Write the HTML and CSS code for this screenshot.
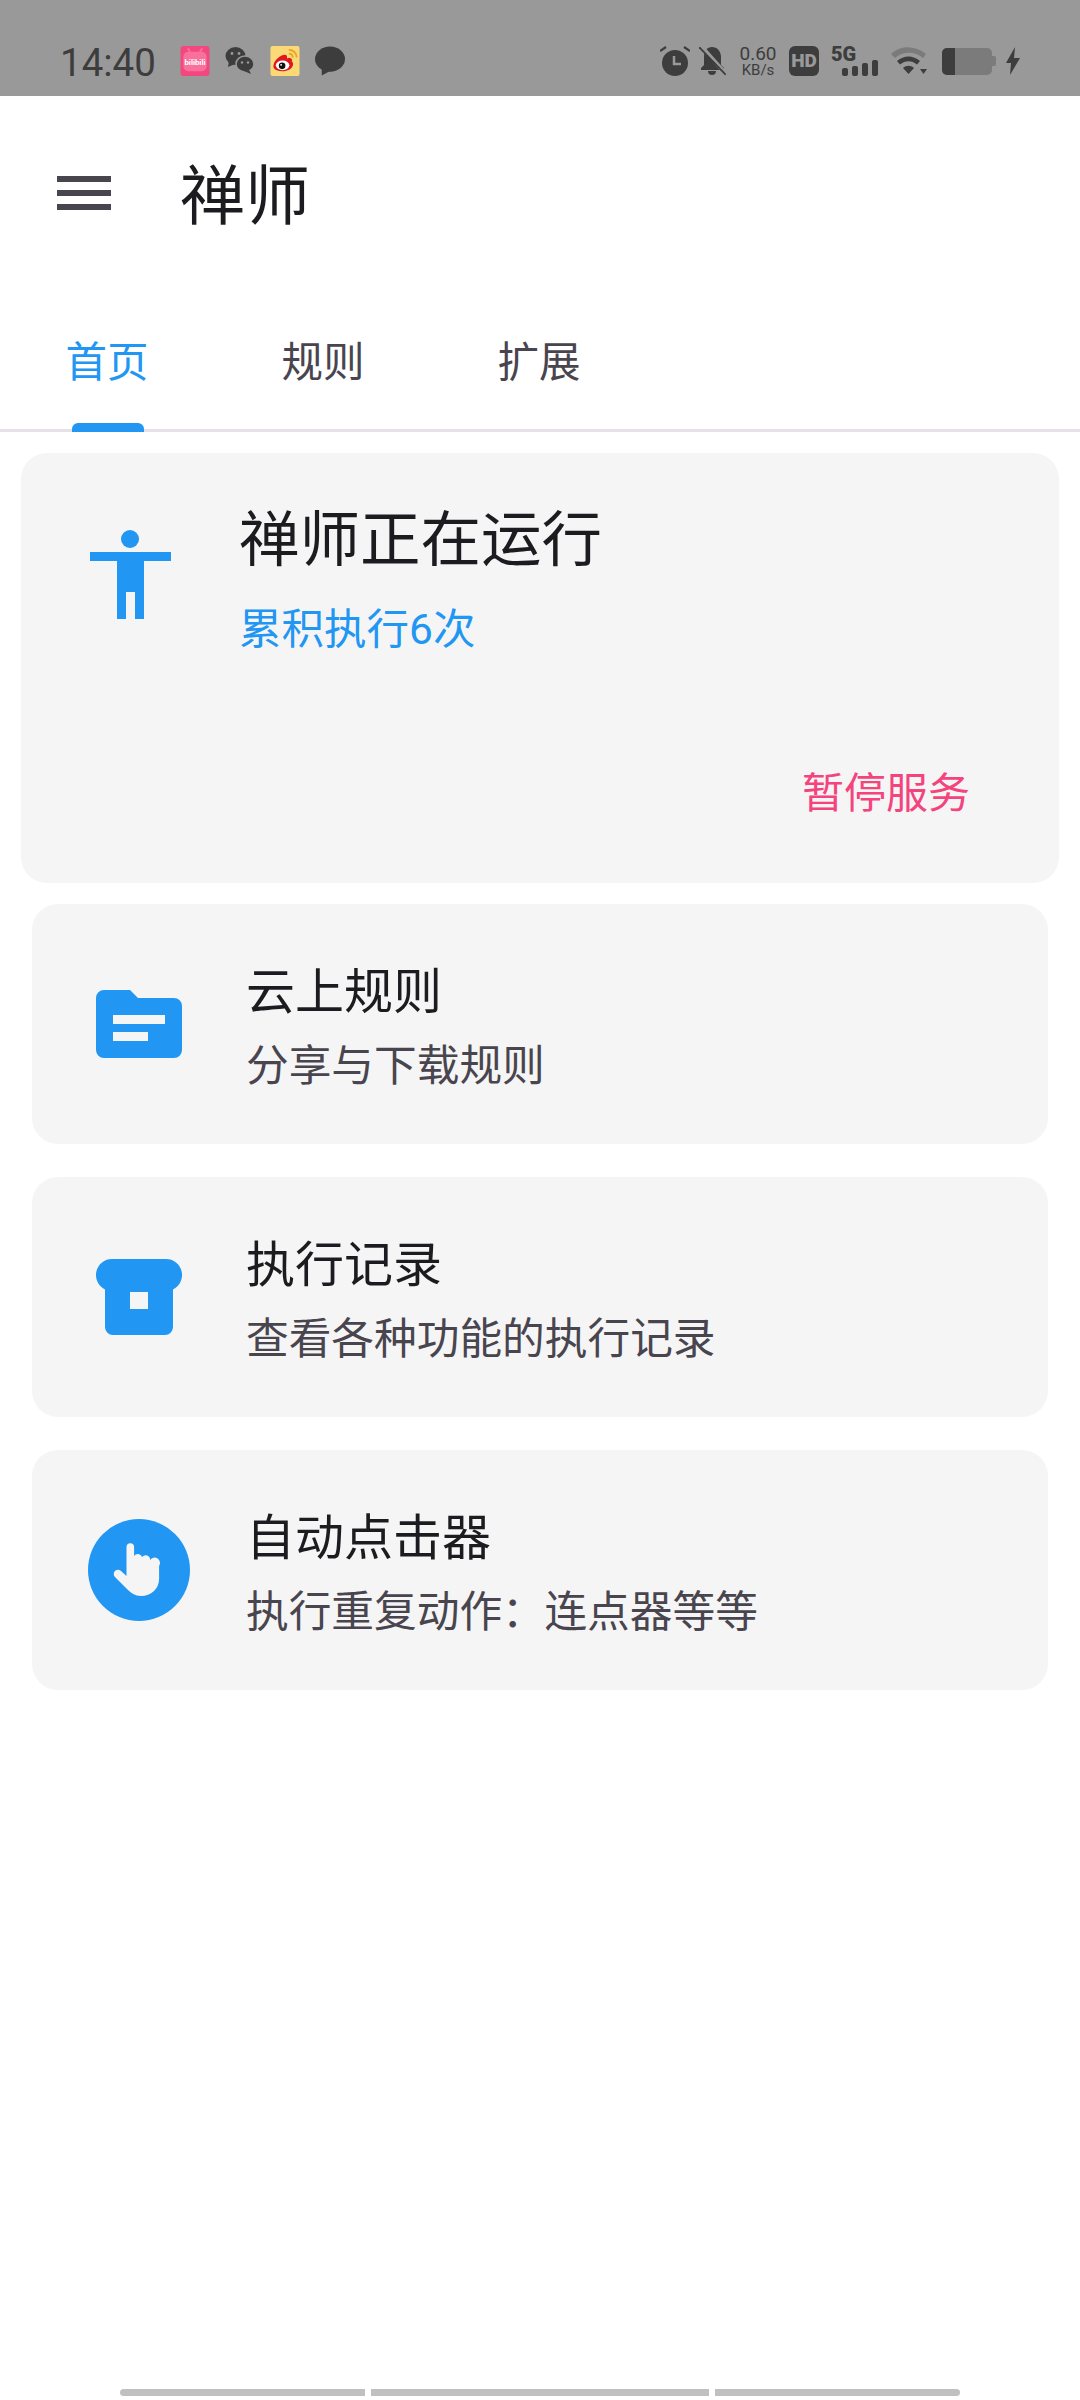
FILE: index.html
```html
<!DOCTYPE html>
<html lang="zh-CN">
  <head>
    <meta charset="UTF-8" />
    <meta name="viewport" content="width=device-width, initial-scale=1.0" />
    <title>禅师</title>
    <link rel="stylesheet" href="styles.css">
  </head>
  <body>
    <div class="status-bar">
      <span class="clock">14:40</span>
      <div class="notify-icons">
        <svg class="note-icon" viewBox="0 0 30 31">
          <rect width="30" height="31" rx="3" fill="#f2487f"/>
          <rect x="3" y="6" width="24" height="20" rx="5" fill="#f9709c"/>
          <path d="M10 6L7.500 2.500M20 6l2.500-3.500" stroke="#f9709c" stroke-width="2"/>
          <text x="15" y="20" class="bili-text">bilibili</text>
        </svg>
        <svg class="note-icon" viewBox="0 0 30 30" fill="#3d3d3d">
          <ellipse cx="10.500" cy="10" rx="10" ry="9"/>
          <path d="M4 15l-1 6 7-3z"/>
          <ellipse cx="20" cy="18" rx="9" ry="8" stroke="#999" stroke-width="1.500"/>
          <path d="M24 24l2 4-7-3z"/>
          <circle cx="7" cy="7.500" r="1.400" fill="#999"/>
          <circle cx="14" cy="7.500" r="1.400" fill="#999"/>
          <circle cx="17" cy="16.500" r="1.200" fill="#999"/>
          <circle cx="23" cy="16.500" r="1.200" fill="#999"/>
        </svg>
        <svg class="note-icon" viewBox="0 0 30 31">
          <rect width="30" height="31" rx="2" fill="#fbd977"/>
          <path d="M3 21c0-6 7-12 12-12 2 0 2.500 2 2 4 4-1.500 6 .5 5 3 2.500 1 2.500 9-8.500 10C7 26.500 3 24 3 21z" fill="#e0181e"/>
          <ellipse cx="12.500" cy="20" rx="7" ry="5" fill="#fff"/>
          <circle cx="12" cy="20.500" r="3.400" fill="#111"/>
          <circle cx="11" cy="19.500" r="1" fill="#fff"/>
          <path d="M19 4c4.500 0 8 3 8 8M19 8c2.500 0 4 1.500 4 4" fill="none" stroke="#eba21c" stroke-width="1.800"/>
        </svg>
        <svg class="note-icon" viewBox="0 0 31 30" fill="#3d3d3d">
          <ellipse cx="15.500" cy="13" rx="15.500" ry="13"/>
          <path d="M7 22v8l9-5z"/>
        </svg>
      </div>
      <div class="system-icons">
        <svg class="alarm" viewBox="0 0 30 30">
          <circle cx="15" cy="17" r="13" fill="#3d3d3d"/>
          <path d="M14 10v8h7" fill="none" stroke="#999" stroke-width="2.500"/>
          <path d="M0 5l6-4M30 5l-6-4" stroke="#3d3d3d" stroke-width="2.200"/>
        </svg>
        <svg class="bell" viewBox="0 0 27 28">
          <path d="M13 0c5 0 9 4 9 10v8l3 3v2H2v-2l3-3v-8C5 4 8 0 13 0z" fill="#3d3d3d"/>
          <path d="M9 24h8a4 4 0 0 1-8 0z" fill="#3d3d3d"/>
          <path d="M2 -1l25 28" stroke="#999" stroke-width="4"/>
          <path d="M0 0l27 28" stroke="#3d3d3d" stroke-width="1.800"/>
        </svg>
        <div class="net-speed">
          <span class="net-value">0.60</span>
          <span class="net-unit">KB/s</span>
        </div>
        <div class="hd-badge">HD</div>
        <div class="signal">
          <span class="signal-label">5G</span>
          <div class="signal-bars">
            <i class="bar bar-a"></i>
            <i class="bar bar-b"></i>
            <i class="bar bar-c"></i>
            <i class="bar bar-d"></i>
          </div>
        </div>
        <svg class="wifi" viewBox="0 0 36 28">
          <path d="M0 7c9-9 24-9 35 0l-3 4c-8-7-20-7-28 0z" fill="#7b7b7b"/>
          <path d="M6 14c7-6 16-6 23 0l-3 3.500c-5-4.500-12-4.500-17 0z" fill="#3d3d3d"/>
          <path d="M12 21c3.500-3 7.500-3 11 0l-5.500 6z" fill="#3d3d3d"/>
          <path d="M29 22h7l-3.500 5z" fill="#3d3d3d"/>
        </svg>
        <div class="battery">
          <div class="battery-body"><div class="battery-level"></div></div>
          <div class="battery-tip"></div>
        </div>
        <svg class="bolt" viewBox="0 0 14 28">
          <path d="M9 0L0 16h5l-1 12 10-17H8z" fill="#3d3d3d"/>
        </svg>
      </div>
    </div>

    <header class="app-bar">
      <div class="menu-icon"><i></i><i></i><i></i></div>
      <h1 class="app-title">禅师</h1>
    </header>

    <nav class="tabs">
      <div class="tab active">首页<span class="tab-mark"></span></div>
      <div class="tab">规则</div>
      <div class="tab">扩展</div>
    </nav>

    <main class="content">
      <section class="status-card">
        <div class="status-top">
          <svg class="person-icon" viewBox="0 0 81 89" fill="#2196f3">
            <circle cx="40" cy="9" r="9"/>
            <path d="M0 22h81v9H54v58h-9V62h-9v27h-9V31H0z"/>
          </svg>
          <div class="status-text">
            <div class="status-title">禅师正在运行</div>
            <div class="status-count">累积执行6次</div>
          </div>
        </div>
        <div class="status-action">暂停服务</div>
      </section>

      <section class="item-card">
        <div class="item-icon">
          <svg class="icon-folder" viewBox="0 0 86 68" fill="#2196f3">
            <path fill-rule="evenodd" d="M8 0h26l8 8h36a8 8 0 0 1 8 8v44a8 8 0 0 1-8 8H8a8 8 0 0 1-8-8V8a8 8 0 0 1 8-8zM17 25v9h52v-9zM17 42v9h35v-9z"/>
          </svg>
        </div>
        <div class="item-text">
          <div class="item-title">云上规则</div>
          <div class="item-sub">分享与下载规则</div>
        </div>
      </section>

      <section class="item-card">
        <div class="item-icon">
          <svg class="icon-box" viewBox="0 0 86 76" fill="#2196f3">
            <path fill-rule="evenodd" d="M16 0h54a16 16 0 0 1 7 30.400V68a8 8 0 0 1-8 8H17a8 8 0 0 1-8-8V30.400A16 16 0 0 1 16 0zM34 33v17h18V33z"/>
          </svg>
        </div>
        <div class="item-text">
          <div class="item-title">执行记录</div>
          <div class="item-sub">查看各种功能的执行记录</div>
        </div>
      </section>

      <section class="item-card">
        <div class="item-icon">
          <svg class="icon-click" viewBox="0 0 102 102">
            <circle cx="51" cy="51" r="51" fill="#2196f3"/>
            <path fill="#f5f5f5" d="M38.500 28a3.800 3.800 0 0 1 7.600 0v9a4.500 4.500 0 0 1 8 1a4.500 4.500 0 0 1 8 3a4.500 4.500 0 0 1 9 6V60C71 70 63 77 53 77C47 77 43 74 39 70L27 58A4 4 0 0 1 33 52L38.500 57z"/>
          </svg>
        </div>
        <div class="item-text">
          <div class="item-title">自动点击器</div>
          <div class="item-sub item-sub-tight">执行重复动作： 连点器等等</div>
        </div>
      </section>
    </main>

    <div class="gesture-bar">
      <span class="gesture gesture-left"></span>
      <span class="gesture gesture-mid"></span>
      <span class="gesture gesture-right"></span>
    </div>
  </body>
</html>
```

FILE: styles.css
```css
* {
  box-sizing: border-box;
}

body {
  margin: 0;
  width: 1080px;
  height: 2400px;
  background-color: #fff;
  font-family: "Roboto", "Noto Sans CJK SC", sans-serif;
  display: flex;
  flex-direction: column;
}

/* 状态栏 */
.status-bar {
  height: 96px;
  background-color: #999;
  color: #3d3d3d;
  display: flex;
  align-items: center;
  padding: 26px 60px 0 60px;
}

.clock {
  font-size: 38.500px;
  padding-top: 2px;
  width: 120px;
}

.notify-icons {
  display: flex;
  align-items: center;
  gap: 15px;
}

.note-icon {
  width: 30px;
  height: 30px;
}

.bili-text {
  font-size: 8px;
  font-weight: 700;
  fill: #fff;
  text-anchor: middle;
}

.system-icons {
  display: flex;
  align-items: center;
  margin-left: auto;
}

.alarm {
  width: 30px;
  height: 30px;
}

.bell {
  width: 27px;
  height: 28px;
  margin-left: 9px;
}

.net-speed {
  display: flex;
  flex-direction: column;
  align-items: center;
  width: 38px;
  margin-left: 13px;
  line-height: 1;
}

.net-value {
  font-size: 19px;
}

.net-unit {
  font-size: 15px;
}

.hd-badge {
  width: 30px;
  height: 30px;
  margin-left: 12px;
  background-color: #3d3d3d;
  color: #999;
  border-radius: 6px;
  font-size: 19px;
  font-weight: 900;
  text-align: center;
  line-height: 30px;
}

.signal {
  position: relative;
  width: 47px;
  height: 30px;
  margin-left: 12px;
}

.signal-label {
  position: absolute;
  left: 0;
  top: -4px;
  font-size: 20px;
  font-weight: 900;
}

.signal-bars {
  position: absolute;
  right: 0;
  bottom: 0;
  display: flex;
  align-items: flex-end;
  gap: 4px;
}

.bar {
  display: block;
  width: 6px;
  background-color: #3d3d3d;
  border-radius: 2px;
}

.bar-a { height: 8px; }
.bar-b { height: 10px; }
.bar-c { height: 13px; }
.bar-d { height: 16px; }

.wifi {
  width: 36px;
  height: 28px;
  margin-left: 13px;
}

.battery {
  display: flex;
  align-items: center;
  margin-left: 15px;
}

.battery-body {
  width: 50px;
  height: 27px;
  background-color: #7b7b7b;
  border-radius: 5px;
  overflow: hidden;
}

.battery-level {
  width: 13px;
  height: 100%;
  background-color: #3d3d3d;
}

.battery-tip {
  width: 4px;
  height: 10px;
  background-color: #7b7b7b;
  border-radius: 0 2px 2px 0;
}

.bolt {
  width: 14px;
  height: 28px;
  margin-left: 10px;
}

/* 标题栏 */
.app-bar {
  height: 194px;
  display: flex;
  align-items: center;
  padding-left: 57px;
}

.menu-icon {
  width: 54px;
  display: flex;
  flex-direction: column;
  gap: 8px;
}

.menu-icon i {
  display: block;
  height: 6px;
  background-color: #49454f;
}

.app-title {
  margin: 8px 0 0 69px;
  font-size: 65px;
  font-weight: 400;
  color: #1c1b1f;
  line-height: 1;
}

/* 标签栏 */
.tabs {
  height: 142px;
  display: flex;
  border-bottom: 3px solid #e6e0e9;
}

.tab {
  position: relative;
  width: 216px;
  display: flex;
  align-items: center;
  justify-content: center;
  padding: 0 2px 2px 0;
  font-size: 41.500px;
  color: #49454f;
}

.tab.active {
  color: #2196f3;
}

.tab-mark {
  position: absolute;
  left: 72px;
  bottom: -3px;
  width: 72px;
  height: 9px;
  background-color: #2196f3;
  border-radius: 6px 6px 0 0;
}

/* 内容 */
.content {
  padding-top: 21px;
  display: flex;
  flex-direction: column;
  align-items: center;
}

.status-card {
  width: 1038px;
  height: 430px;
  margin-bottom: 21px;
  padding: 52px 89px 64px 69px;
  background-color: #f5f5f5;
  border-radius: 26px;
  display: flex;
  flex-direction: column;
  justify-content: space-between;
}

.status-top {
  display: flex;
  align-items: flex-start;
}

.person-icon {
  width: 81px;
  height: 89px;
  margin-top: 25px;
}

.status-text {
  margin-left: 68px;
}

.status-title {
  font-size: 60.500px;
  line-height: 72px;
  color: #1c1b1f;
}

.status-count {
  margin-top: 28px;
  font-size: 42.500px;
  line-height: 50px;
  color: #2196f3;
}

.status-action {
  align-self: flex-end;
  font-size: 42px;
  line-height: 50px;
  color: #f4447e;
}

.item-card {
  width: 1016px;
  height: 240px;
  margin-bottom: 33px;
  background-color: #f5f5f5;
  border-radius: 26px;
  display: flex;
  align-items: center;
}

.item-icon {
  width: 214px;
  display: flex;
  justify-content: center;
  flex-shrink: 0;
}

.icon-folder {
  width: 86px;
  height: 68px;
}

.icon-box {
  width: 86px;
  height: 76px;
}

.icon-click {
  width: 102px;
  height: 102px;
}

.item-text {
  margin-top: 4px;
}

.item-title {
  font-size: 49px;
  line-height: 60px;
  color: #1c1b1f;
  padding-top: 2px;
}

.item-sub {
  margin-top: 18px;
  font-size: 42.700px;
  line-height: 50px;
  color: #49454f;
}

.item-sub-tight {
  word-spacing: -11px;
}

/* 底部手势条 */
.gesture-bar {
  margin-top: auto;
  padding-bottom: 4px;
  display: flex;
  justify-content: center;
  gap: 6px;
}

.gesture {
  height: 7px;
  background-color: #c0c0c0;
}

.gesture-left {
  width: 245px;
  border-radius: 4px 0 0 4px;
}

.gesture-mid {
  width: 338px;
}

.gesture-right {
  width: 245px;
  border-radius: 0 4px 4px 0;
}
```
